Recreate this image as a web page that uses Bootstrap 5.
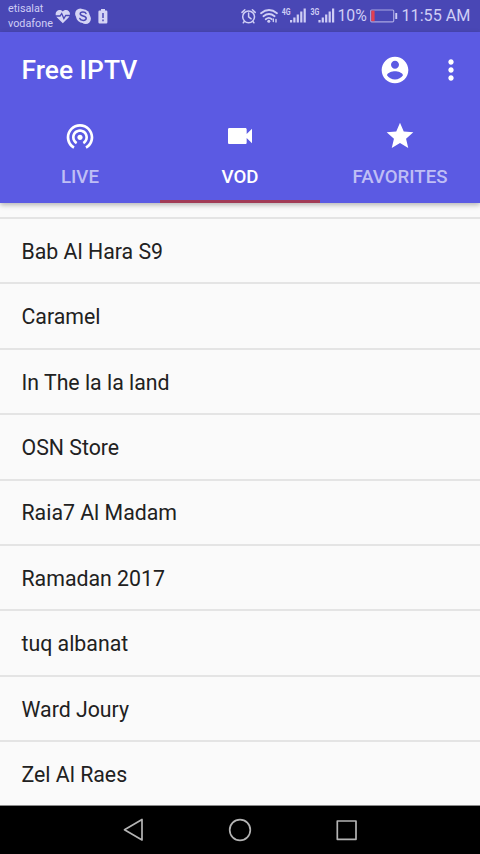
<!DOCTYPE html>
<html lang="en">
<head>
  <meta charset="UTF-8" />
  <meta name="viewport" content="width=device-width, initial-scale=1.0"/>
  <title>Free IPTV</title>
  <link href="https://cdn.jsdelivr.net/npm/bootstrap@5.3.0/dist/css/bootstrap.min.css" rel="stylesheet" />
  <style>
    body {
      background-color: #fafafa;
      font-family: Roboto, "Liberation Sans", sans-serif;
      color: #212121;
    }

    svg {
      display: block;
      flex-shrink: 0;
    }

    /* System status bar */
    .status-bar {
      height: 32px;
      padding-left: 8px;
      background-color: #4947b5;
      color: #cfcef5;
      white-space: nowrap;
    }

    .carriers {
      width: 47px;
      padding-top: 1px;
      font-size: 10.8px;
      line-height: 14.4px;
    }

    .battery-text {
      width: 33px;
      margin-left: 1px;
      font-size: 15.8px;
    }

    .clock {
      margin-left: 3px;
      padding: 1px 9.5px 0 0;
      font-size: 16.2px;
    }

    /* Toolbar and tabs */
    .app-header {
      height: 171px;
      background-color: #5b5ae3;
      box-shadow: 0 2px 5px rgba(0, 0, 0, 0.28);
      z-index: 1;
    }

    .toolbar {
      height: 75px;
      padding: 0 13.5px 0 21.5px;
    }

    .app-title {
      padding-top: 2.4px;
      font-size: 26.4px;
      font-weight: 500;
    }

    .tool-icons {
      gap: 24px;
    }

    .app-tabs {
      height: 96px;
    }

    .app-tabs .nav-link {
      height: 96px;
      padding: 13px 0 0;
      border-bottom: 3px solid transparent;
      border-radius: 0;
      color: #fff;
      font-size: 18.66px;
      font-weight: 500;
      line-height: 22px;
    }

    .app-tabs .nav-link span {
      margin-top: 14px;
      color: #bfbef5;
    }

    .app-tabs .nav-link.active {
      border-bottom-color: #a13a55;
    }

    .app-tabs .nav-link.active span {
      color: #fff;
    }

    /* Channel list, scrolled a little under the header */
    .channels {
      height: 602px;
      padding-top: 14px;
    }

    .channels .list-group-item {
      height: 65.4px;
      padding: 2.4px 21.5px 0;
      border-width: 2px 0 0;
      border-color: #e4e4e4;
      background-color: transparent;
      color: #212121;
      font-size: 21.3px;
    }

    /* System navigation */
    .nav-keys {
      height: 49px;
      border-top: 1px solid #8a8a8a;
      background-color: #000;
    }
  </style>
</head>
<body>

<div class="vh-100 d-flex flex-column overflow-hidden">
  <div class="status-bar d-flex align-items-center flex-shrink-0">
    <div class="carriers">etisalat<br>vodafone</div>
    <svg width="55" height="32" viewBox="55 0 55 32">
      <path d="M62.800 23.200 57 17.400c-4-4.600 1.500-10 5.800-6 4.300-4 9.800 1.400 5.800 6z" fill="#d5d4f5"/>
      <path d="M55.500 16h4.500l1.700-2.500 2.200 5 1.800-3h4.500" fill="none" stroke="#4947b5" stroke-width="1.300"/>
      <circle cx="80.300" cy="13.700" r="5.200" fill="#d5d4f5"/>
      <circle cx="85.700" cy="18.700" r="5.200" fill="#d5d4f5"/>
      <circle cx="83" cy="16.200" r="6.900" fill="#d5d4f5"/>
      <path d="M86 13.600c-.8-2.300-5.800-2.200-5.800.2 0 3 6 1.400 6 4.500 0 2.800-5.600 2.700-6.400.1" fill="none" stroke="#4947b5" stroke-width="1.500" stroke-linecap="round"/>
      <path d="M101 9h4v1.500h1.200q1.200 0 1.200 1.200v10.600q0 1.200-1.200 1.200h-6.600q-1.200 0-1.200-1.200v-10.600q0-1.200 1.200-1.200h1.400z" fill="#d5d4f5"/>
      <path d="M103 13v5M103 19.500v1.700" stroke="#4947b5" stroke-width="1.500"/>
    </svg>
    <svg class="ms-auto" width="96" height="32" viewBox="240 0 96 32">
      <g fill="none" stroke="#cfcef5" stroke-width="1.500" stroke-linecap="round">
        <circle cx="248.600" cy="16.800" r="5.900"/>
        <path d="M248.600 13.100v3.700l2.500 2M242 12.400l2.800-2.700M255.200 12.400l-2.800-2.700M244.300 21.500l-1 1.300M252.900 21.500l1 1.300"/>
        <path d="M261 13.300q8-6.500 16 0M263.400 16.300q5.600-4.500 11.200 0M265.700 19.200q3.300-2.600 6 0" stroke-width="1.800"/>
        <path d="M273.300 19v2.500M276 19.500v2.500" stroke-width="1.400"/>
      </g>
      <circle cx="268.800" cy="21.300" r="1.500" fill="#cfcef5"/>
      <g fill="#cfcef5">
        <text x="281.800" y="15.300" font-size="9" font-weight="700" textLength="8.800" lengthAdjust="spacingAndGlyphs">4G</text>
        <path d="M290 20h2.200v2.500h-2.200zM293.300 17.600h2.200v4.900h-2.200zM296.700 14.600h2.200v7.900h-2.200zM300.200 11.600h2.200v10.900h-2.200zM303.600 8.600h2.200v13.900h-2.200z"/>
        <text x="310.500" y="15.300" font-size="9" font-weight="700" textLength="8.800" lengthAdjust="spacingAndGlyphs">3G</text>
        <path d="M318.400 20h2.200v2.500h-2.200zM321.700 17.600h2.200v4.900h-2.200zM325.100 14.600h2.200v7.900h-2.200zM328.600 11.600h2.200v10.900h-2.200zM332 8.600h2.200v13.900h-2.200z"/>
      </g>
    </svg>
    <div class="battery-text">10%</div>
    <svg width="28" height="32" viewBox="370 0 28 32">
      <rect x="370.700" y="10" width="23" height="11.800" rx="1" fill="none" stroke="#a9a7e2" stroke-width="1.200"/>
      <path d="M371.300 10.600h3.300v10.600h-3.300z" fill="#e2404f"/>
      <path d="M395.300 13h1.900v6h-1.900z" fill="#cfcef5"/>
    </svg>
    <div class="clock">11:55 AM</div>
  </div>

  <header class="app-header position-relative flex-shrink-0 text-white">
    <div class="toolbar d-flex align-items-center justify-content-between">
      <div class="app-title">Free IPTV</div>
      <div class="tool-icons d-flex">
        <svg width="32" height="32" viewBox="0 0 24 24" fill="currentColor">
          <path d="M12 2C6.480 2 2 6.480 2 12s4.480 10 10 10 10-4.480 10-10S17.520 2 12 2zm0 3c1.660 0 3 1.340 3 3s-1.340 3-3 3-3-1.340-3-3 1.340-3 3-3zm0 14.200c-2.500 0-4.710-1.280-6-3.220.03-1.990 4-3.080 6-3.080 1.990 0 5.970 1.090 6 3.080-1.290 1.940-3.500 3.220-6 3.220z"/>
        </svg>
        <svg width="32" height="32" viewBox="0 0 24 24" fill="currentColor">
          <path d="M12 8c1.100 0 2-.9 2-2s-.9-2-2-2-2 .9-2 2 .9 2 2 2zm0 2c-1.100 0-2 .9-2 2s.9 2 2 2 2-.9 2-2-.9-2-2-2zm0 6c-1.100 0-2 .9-2 2s.9 2 2 2 2-.9 2-2-.9-2-2-2z"/>
        </svg>
      </div>
    </div>
    <nav class="app-tabs nav nav-fill row g-0">
      <a class="nav-link col-4 d-flex flex-column align-items-center" href="#">
        <svg width="32" height="32" viewBox="0 0 24 24" fill="currentColor">
          <path d="M12 11c-1.100 0-2 .9-2 2s.9 2 2 2 2-.9 2-2-.9-2-2-2zm6 2c0-3.310-2.690-6-6-6s-6 2.690-6 6c0 2.220 1.210 4.150 3 5.190l1-1.740c-1.190-.7-2-1.970-2-3.450 0-2.210 1.790-4 4-4s4 1.790 4 4c0 1.480-.81 2.750-2 3.450l1 1.740c1.790-1.040 3-2.970 3-5.190zM12 3C6.480 3 2 7.480 2 13c0 3.700 2.010 6.920 4.990 8.650l1-1.730C5.610 18.530 4 15.960 4 13c0-4.420 3.580-8 8-8s8 3.580 8 8c0 2.960-1.610 5.530-4 6.920l1 1.730c2.990-1.730 5-4.950 5-8.650 0-5.520-4.480-10-10-10z"/>
        </svg>
        <span>LIVE</span>
      </a>
      <a class="nav-link active col-4 d-flex flex-column align-items-center" href="#">
        <svg width="32" height="32" viewBox="0 0 24 24" fill="currentColor">
          <path d="M17 10.500V7c0-.55-.45-1-1-1H4c-.55 0-1 .45-1 1v10c0 .55.450 1 1 1h12c.55 0 1-.45 1-1v-3.500l4 4v-11l-4 4z"/>
        </svg>
        <span>VOD</span>
      </a>
      <a class="nav-link col-4 d-flex flex-column align-items-center" href="#">
        <svg width="32" height="32" viewBox="0 0 24 24" fill="currentColor">
          <path d="M12 17.270 18.180 21l-1.640-7.030L22 9.240l-7.190-.61L12 2 9.190 8.630 2 9.240l5.460 4.730L5.820 21z"/>
        </svg>
        <span>FAVORITES</span>
      </a>
    </nav>
  </header>

  <main class="channels flex-shrink-0 overflow-hidden">
    <div class="list-group list-group-flush">
      <div class="list-group-item d-flex align-items-center">Bab Al Hara S9</div>
      <div class="list-group-item d-flex align-items-center">Caramel</div>
      <div class="list-group-item d-flex align-items-center">In The la la land</div>
      <div class="list-group-item d-flex align-items-center">OSN Store</div>
      <div class="list-group-item d-flex align-items-center">Raia7 Al Madam</div>
      <div class="list-group-item d-flex align-items-center">Ramadan 2017</div>
      <div class="list-group-item d-flex align-items-center">tuq albanat</div>
      <div class="list-group-item d-flex align-items-center">Ward Joury</div>
      <div class="list-group-item d-flex align-items-center">Zel Al Raes</div>
    </div>
  </main>

  <footer class="nav-keys flex-shrink-0 d-flex justify-content-center">
    <svg width="240" height="48" viewBox="120 806 240 48" fill="none" stroke="#b4b4b4" stroke-width="1.700" stroke-linejoin="round">
      <path d="M142 819.500v20.500l-17.500-10.200z"/>
      <circle cx="240" cy="830" r="10.300"/>
      <rect x="337.300" y="821" width="18.700" height="18.300"/>
    </svg>
  </footer>
</div>

<script src="https://cdn.jsdelivr.net/npm/bootstrap@5.3.0/dist/js/bootstrap.bundle.min.js"></script>
</body>
</html>
